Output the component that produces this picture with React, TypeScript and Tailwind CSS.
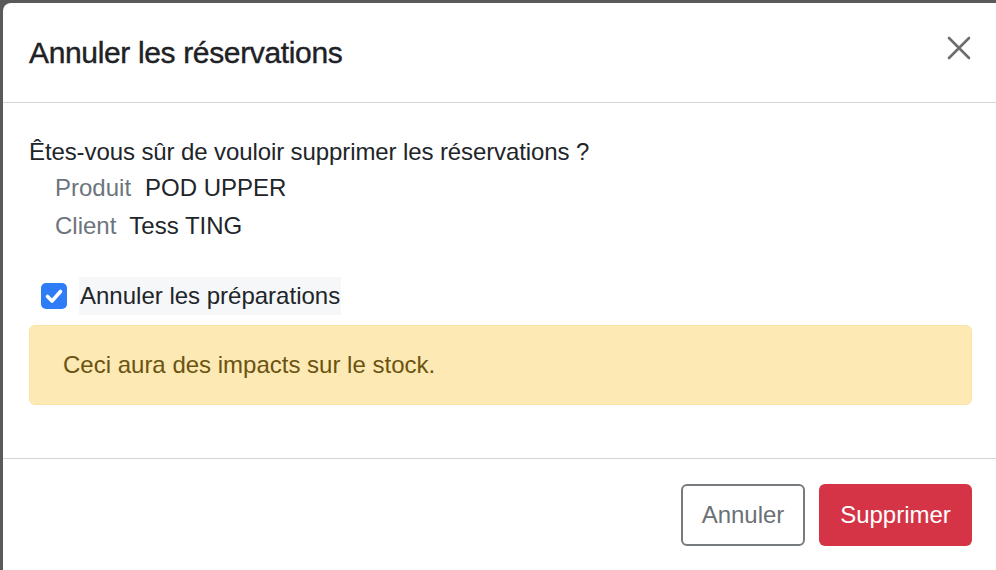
import React from "react";

export default function App() {
  return (
    <div
      className="w-[996px] h-[570px] bg-[#5a5a5a] pt-[3px] pl-[3px] overflow-hidden"
      style={{ fontFamily: '"Liberation Sans", Arial, sans-serif' }}
    >
      <div className="bg-white rounded-tl-[8px] h-[567px] flex flex-col">
        <div className="h-[100px] flex items-center justify-between pl-[26px] pr-[25px] border-b border-[#d4d4d4] shrink-0">
          <h5 className="text-[30px] leading-[36px] tracking-[-0.35px] text-[#1e2125] [-webkit-text-stroke:0.4px_#1e2125]">
            Annuler les réservations
          </h5>
          <svg width="24" height="24" viewBox="0 0 24 24" className="-mt-[10px]">
            <path d="M2 2 L22 22 M22 2 L2 22" stroke="#6d6d6d" strokeWidth="2.6" strokeLinecap="round" />
          </svg>
        </div>
        <div className="pl-[26px] pr-[24px] pt-[31px] text-[24px] text-[#212529]">
          <div className="leading-[36px] tracking-[-0.1px]">Êtes-vous sûr de vouloir supprimer les réservations ?</div>
          <div className="leading-[36px] pl-[26px] flex gap-[14px]">
            <span className="text-[#6c757d]">Produit</span>
            <span>POD UPPER</span>
          </div>
          <div className="leading-[36px] pl-[26px] flex gap-[13px] mt-[2px]">
            <span className="text-[#6c757d]">Client</span>
            <span>Tess TING</span>
          </div>
          <div className="mt-[33px] flex items-center pl-[12px] h-[38px]">
            <span className="w-[26px] h-[26px] rounded-[5px] bg-[#2f7df6] flex items-center justify-center">
              <svg width="20" height="20" viewBox="0 0 20 20">
                <path d="M3.5 10.5 L8 15 L16.5 5.5" fill="none" stroke="white" strokeWidth="3.6" strokeLinecap="round" strokeLinejoin="round" />
              </svg>
            </span>
            <span className="ml-[12px] h-[38px] flex items-center bg-[#f6f7f9] pl-[1px] pr-[1px]">
              Annuler les préparations
            </span>
          </div>
          <div className="mt-[10px] h-[80px] rounded-[6px] bg-[#fde9b4] border border-[#fce4a8] flex items-center pl-[33px] text-[#6b5312]">
            Ceci aura des impacts sur le stock.
          </div>
        </div>
        <div className="mt-[53px] border-t border-[#d4d4d4] flex justify-end gap-[14px] pt-[25px] pr-[24px]">
          <button className="w-[124px] h-[62px] rounded-[6px] border-2 border-[#777b80] text-[#6c7075] text-[24px] bg-white">
            Annuler
          </button>
          <button className="w-[153px] h-[62px] rounded-[6px] bg-[#d53446] text-white text-[24px]">
            Supprimer
          </button>
        </div>
      </div>
    </div>
  );
}
